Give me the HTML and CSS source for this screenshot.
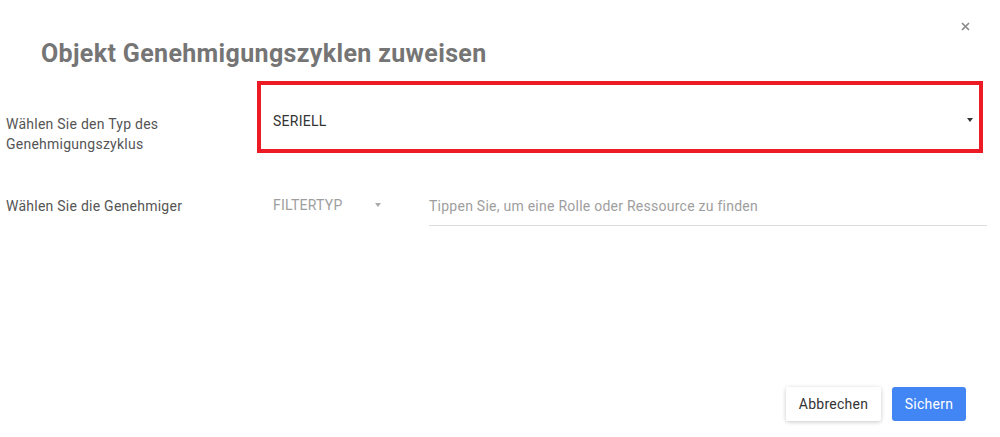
FILE: index.html
```html
<!DOCTYPE html>
<html lang="de">
<head>
  <meta charset="UTF-8">
  <title>Objekt Genehmigungszyklen zuweisen</title>
  <link rel="stylesheet" href="styles.css">
</head>
<body>
  <div class="dialog">
    <div class="dialog-header">
      <h1>Objekt Genehmigungszyklen zuweisen</h1>
      <button class="close-btn" title="Schließen">
        <svg width="9" height="9" viewBox="0 0 9 9">
          <path d="M1 1 L8 8 M8 1 L1 8" stroke="#8a8a8a" stroke-width="1.7" fill="none"/>
        </svg>
      </button>
    </div>

    <div class="form">
      <div class="form-row row-type">
        <label class="form-label">Wählen Sie den Typ des Genehmigungszyklus</label>
        <div class="select select-type">
          <span>SERIELL</span>
          <span class="caret"></span>
        </div>
      </div>

      <div class="form-row row-approvers">
        <label class="form-label">Wählen Sie die Genehmiger</label>
        <div class="select select-filter">
          <span>FILTERTYP</span>
          <span class="caret caret-light"></span>
        </div>
        <input type="text" class="search-input" placeholder="Tippen Sie, um eine Rolle oder Ressource zu finden">
      </div>
    </div>

    <div class="dialog-footer">
      <button class="btn btn-cancel">Abbrechen</button>
      <button class="btn btn-save">Sichern</button>
    </div>
  </div>
</body>
</html>
```

FILE: styles.css
```css
html, body {
  margin: 0;
  height: 100%;
}
body {
  font-family: Roboto, 'Liberation Sans', sans-serif;
  background-color: #fff;
  color: #333;
  letter-spacing: 0.25px;
}
.dialog {
  display: flex;
  flex-direction: column;
  height: 100%;
  box-sizing: border-box;
  padding-bottom: 16px;
}
.dialog-header {
  display: flex;
  justify-content: space-between;
  align-items: flex-start;
  padding: 0 30px 0 41px;
}
.dialog-header h1 {
  margin: 40px 0 0 0;
  font-size: 25px;
  line-height: 28px;
  font-weight: 700;
  letter-spacing: 0.35px;
  color: #757575;
}
.close-btn {
  margin-top: 22px;
  padding: 0;
  border: none;
  background: none;
  cursor: pointer;
  width: 9px;
  height: 9px;
  display: flex;
}
.form {
  display: flex;
  flex-direction: column;
  gap: 32px;
  padding: 13px 13px 0 6px;
}
.form-row {
  display: flex;
}
.form-label {
  width: 251px;
  flex-shrink: 0;
  font-size: 14px;
  line-height: 20px;
  color: #555;
}
.row-type .form-label {
  padding-top: 33px;
  width: 170px;
  margin-right: 81px;
}
.select {
  display: flex;
  align-items: center;
  box-sizing: border-box;
  font-size: 14px;
  cursor: pointer;
}
.select-type {
  width: 726px;
  height: 72px;
  border: 4px solid #ed1c24;
  padding: 8px 6px 0 12px;
  color: #333;
}
.caret {
  margin-left: auto;
  margin-top: -2px;
  width: 0;
  height: 0;
  border-left: 3.5px solid transparent;
  border-right: 3.5px solid transparent;
  border-top: 4px solid #333;
}
.caret-light {
  margin-top: 0;
  border-top-color: #aaa;
}
.row-approvers {
  align-items: center;
  height: 40px;
}
.select-filter {
  width: 140px;
  height: 40px;
  padding: 0 16px;
  color: #9e9e9e;
  margin-top: -3px;
}
.search-input {
  flex: 1;
  margin-left: 32px;
  height: 40px;
  box-sizing: border-box;
  border: none;
  border-bottom: 1px solid #ddd;
  padding: 0;
  font-family: inherit;
  font-size: 14px;
  letter-spacing: 0.25px;
  outline: none;
}
.search-input::placeholder {
  color: #9e9e9e;
}
.dialog-footer {
  margin-top: auto;
  display: flex;
  justify-content: flex-end;
  gap: 11px;
  padding-right: 34px;
}
.btn {
  height: 34px;
  border: none;
  border-radius: 2px;
  font-family: inherit;
  font-size: 14px;
  letter-spacing: 0.25px;
  cursor: pointer;
}
.btn-cancel {
  width: 95px;
  background-color: #fff;
  color: #333;
  box-shadow: 0 1px 4px rgba(0, 0, 0, 0.22);
}
.btn-save {
  width: 74px;
  background-color: #4285f4;
  color: #fff;
  border-radius: 3px;
}
```
